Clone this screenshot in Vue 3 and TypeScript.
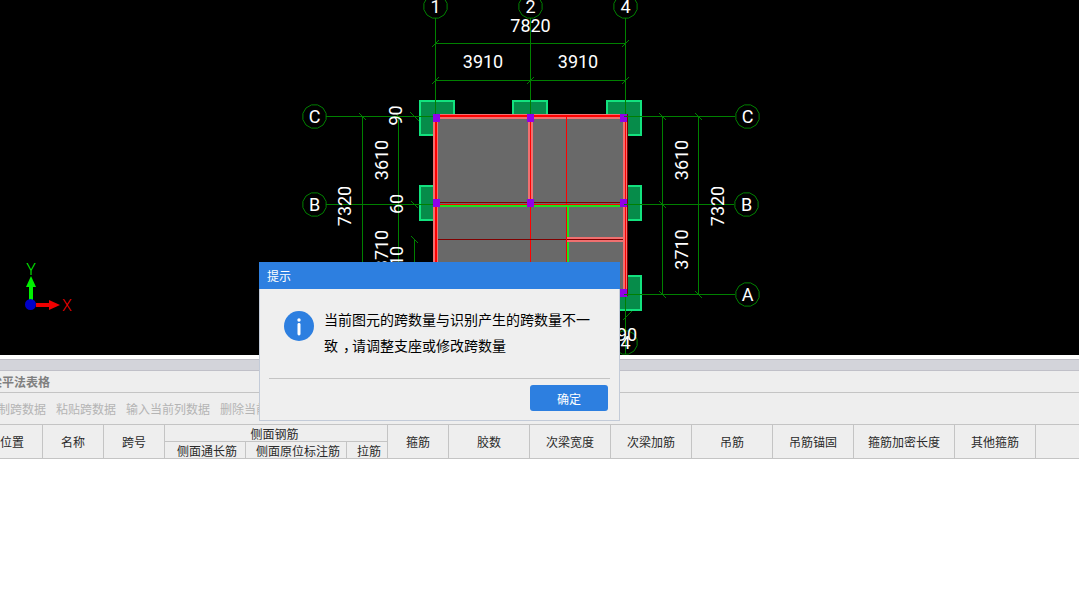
<script setup lang="ts">
interface Dim { t: string; x: number; y: number }
interface Bubble { t: string; x: number; y: number }
interface Tick { x: number; y: number; d: 1 | -1 }
interface Rect { x: number; y: number; w: number; h: number; c: string }

const green = '#008000'

const bubbles: Bubble[] = [
  { t: '1', x: 435, y: 6 }, { t: '2', x: 530, y: 6 }, { t: '4', x: 625, y: 6 },
  { t: 'C', x: 314, y: 116 }, { t: 'C', x: 747, y: 116 },
  { t: 'B', x: 314, y: 204 }, { t: 'B', x: 746, y: 204 },
  { t: 'A', x: 747, y: 294 }, { t: '4', x: 625, y: 342 }
]

function ring(cx: number, cy: number): string {
  const out: string[] = []
  for (let i = 0; i < 12; i++) {
    const a = (Math.PI * 2 * i) / 12 + Math.PI / 12
    out.push(`${(cx + 12 * Math.cos(a)).toFixed(1)},${(cy + 12 * Math.sin(a)).toFixed(1)}`)
  }
  return out.join(' ')
}

const flatDims: Dim[] = [
  { t: '7820', x: 530.5, y: 32 },
  { t: '3910', x: 483, y: 68 },
  { t: '3910', x: 578, y: 68 },
  { t: '90', x: 627, y: 341 }
]
const tallDims: Dim[] = [
  { t: '90', x: 395, y: 115.5 },
  { t: '3610', x: 381, y: 160 },
  { t: '7320', x: 344, y: 206 },
  { t: '60', x: 396, y: 204 },
  { t: '3710', x: 381, y: 250 },
  { t: '10', x: 396, y: 256 },
  { t: '3610', x: 681, y: 160 },
  { t: '3710', x: 681, y: 249.5 },
  { t: '7320', x: 717, y: 206 }
]

const ticks: Tick[] = [
  { x: 435, y: 43, d: 1 }, { x: 625, y: 43, d: 1 },
  { x: 435, y: 80, d: 1 }, { x: 530, y: 80, d: 1 }, { x: 625, y: 80, d: 1 },
  { x: 362, y: 116, d: -1 }, { x: 398, y: 116, d: -1 },
  { x: 413, y: 115, d: -1 }, { x: 415, y: 117, d: -1 },
  { x: 414, y: 204, d: -1 }, { x: 414, y: 239, d: -1 },
  { x: 662, y: 116, d: -1 }, { x: 698, y: 116, d: -1 },
  { x: 662, y: 204, d: -1 }, { x: 662, y: 294, d: -1 }, { x: 698, y: 294, d: -1 },
  { x: 626, y: 316, d: 1 }, { x: 628, y: 314, d: 1 }
]

const columns = [
  { x: 419, y: 100, w: 36, h: 36 }, { x: 512, y: 100, w: 36, h: 36 },
  { x: 606, y: 100, w: 36, h: 36 }, { x: 419, y: 185, w: 36, h: 36 },
  { x: 606, y: 185, w: 36, h: 36 }, { x: 606, y: 275, w: 36, h: 36 }
]

const pink = '#f07070'
const red = '#ff0000'
const dark = '#800000'
const lime = '#20e020'
const beams: Rect[] = [
  { x: 433, y: 114, w: 195, h: 5, c: pink },
  { x: 433, y: 115, w: 195, h: 2, c: red },
  { x: 433, y: 114, w: 5, h: 182, c: pink },
  { x: 435, y: 114, w: 2, h: 182, c: red },
  { x: 528, y: 114, w: 5, h: 90, c: pink },
  { x: 530, y: 114, w: 1, h: 182, c: red },
  { x: 623, y: 114, w: 5, h: 182, c: pink },
  { x: 625, y: 114, w: 1, h: 182, c: red },
  { x: 627, y: 114, w: 1, h: 182, c: dark },
  { x: 566, y: 116, w: 1, h: 180, c: red },
  { x: 567, y: 207, w: 2, h: 89, c: lime },
  { x: 438, y: 205, w: 185, h: 2, c: lime },
  { x: 433, y: 202, w: 195, h: 1, c: dark },
  { x: 433, y: 204, w: 195, h: 1, c: red },
  { x: 438, y: 239, w: 128, h: 1, c: dark },
  { x: 567, y: 237, w: 56, h: 5, c: pink },
  { x: 567, y: 239, w: 56, h: 1, c: dark }
]

const nodes = [
  { x: 433, y: 114 }, { x: 527, y: 114 }, { x: 620, y: 114 },
  { x: 433, y: 199 }, { x: 527, y: 199 }, { x: 620, y: 199 },
  { x: 620, y: 289 }
]

const toolItems = ['复制跨数据', '粘贴跨数据', '输入当前列数据', '删除当前列数据']

const leftCols = [
  { t: '位置', w: 61 }, { t: '名称', w: 61 }, { t: '跨号', w: 61 }
]
const subCols = [
  { t: '侧面通长筋', w: 81 }, { t: '侧面原位标注筋', w: 101 }, { t: '拉筋', w: 40 }
]
const rightCols = [
  { t: '箍筋', w: 61 }, { t: '胶数', w: 81 }, { t: '次梁宽度', w: 81 },
  { t: '次梁加筋', w: 81 }, { t: '吊筋', w: 81 }, { t: '吊筋锚固', w: 81 },
  { t: '箍筋加密长度', w: 101 }, { t: '其他箍筋', w: 81 }
]
</script>

<template>
  <div class="page">
    <svg class="canvas" width="1079" height="355" viewBox="0 0 1079 355">
      <g v-for="(c, i) in columns" :key="'col' + i" shape-rendering="crispEdges">
        <rect :x="c.x + 1" :y="c.y + 1" :width="c.w - 2" :height="c.h - 2" fill="#068c4a" stroke="#12e27e" stroke-width="2" />
      </g>

      <g :stroke="green" stroke-width="1" shape-rendering="crispEdges" fill="none">
        <path d="M435.5 18V116M530.5 18V116M625.5 18V354" />
        <path d="M435 43.5H625M435 80.5H625" />
        <path d="M326 116.5H735M326 204.5H734M600 294.5H735" />
        <path d="M362.5 116V300M398.5 116V300M414.5 239V300" />
        <path d="M662.5 116V294M698.5 116V294" />
      </g>

      <g :stroke="green" stroke-width="1" fill="none">
        <polygon v-for="(b, i) in bubbles" :key="'ring' + i" :points="ring(b.x + 0.5, b.y + 0.5)" />
        <line
          v-for="(t, i) in ticks"
          :key="'tick' + i"
          :x1="t.x + 0.5 - 3.5"
          :y1="t.y + 0.5 + 3.5 * t.d"
          :x2="t.x + 0.5 + 3.5"
          :y2="t.y + 0.5 - 3.5 * t.d"
        />
      </g>

      <g shape-rendering="crispEdges">
        <rect x="433" y="114" width="195" height="182" fill="#696969" />
        <rect v-for="(b, i) in beams" :key="'beam' + i" :x="b.x" :y="b.y" :width="b.w" :height="b.h" :fill="b.c" />
        <rect v-for="(n, i) in nodes" :key="'node' + i" :x="n.x" :y="n.y" width="7" height="8" fill="#9000e8" />
        <rect x="624" y="204" width="18" height="1" :fill="green" />
        <rect x="624" y="116" width="18" height="1" :fill="green" />
        <rect x="624" y="294" width="18" height="1" :fill="green" />
        <rect x="419" y="116" width="14" height="1" :fill="green" />
        <rect x="419" y="204" width="14" height="1" :fill="green" />
      </g>

      <text v-for="(b, i) in bubbles" :key="'label' + i" class="cad" :x="b.x + 0.5" :y="b.y + 7" text-anchor="middle">{{ b.t }}</text>
      <text v-for="(d, i) in flatDims" :key="'flat' + i" class="cad" :x="d.x" :y="d.y" text-anchor="middle">{{ d.t }}</text>
      <text
        v-for="(d, i) in tallDims"
        :key="'tall' + i"
        class="cad"
        text-anchor="middle"
        :transform="`translate(${d.x + 6.5} ${d.y}) rotate(-90)`"
      >{{ d.t }}</text>

      <g shape-rendering="crispEdges">
        <rect x="29" y="287" width="4" height="14" fill="#00f000" />
        <rect x="36" y="303" width="14" height="4" fill="#f00000" />
      </g>
      <polygon points="31,276 26,287 36,287" fill="#00f000" />
      <polygon points="60,305 49,300 49,310" fill="#f00000" />
      <circle cx="30.5" cy="304.5" r="5.5" fill="#0000c8" />
      <text class="axis-y" x="31" y="275" text-anchor="middle">Y</text>
      <text class="axis-x" x="67" y="311" text-anchor="middle">X</text>
    </svg>

    <section class="panel">
      <div class="strip"></div>
      <div class="title-row"><span class="title">梁平法表格</span></div>
      <div class="tool-row">
        <span v-for="item in toolItems" :key="item" class="tool">{{ item }}</span>
      </div>
      <div class="head">
        <div v-for="c in leftCols" :key="c.t" class="cell" :style="{ width: c.w + 'px' }">{{ c.t }}</div>
        <div class="group">
          <div class="group-top">侧面钢筋</div>
          <div class="group-sub">
            <div v-for="c in subCols" :key="c.t" class="sub" :style="{ width: c.w + 'px' }">{{ c.t }}</div>
          </div>
        </div>
        <div v-for="c in rightCols" :key="c.t" class="cell" :style="{ width: c.w + 'px' }">{{ c.t }}</div>
        <div class="rest"></div>
      </div>
    </section>

    <div class="dialog">
      <header class="dlg-head">提示</header>
      <div class="dlg-body">
        <svg class="dlg-icon" width="30" height="30" viewBox="0 0 30 30">
          <circle cx="15" cy="15" r="15" fill="#2d7fe0" />
          <circle cx="15" cy="9" r="1.7" fill="#fff" />
          <rect x="13.5" y="12" width="3" height="12.5" rx="1.4" fill="#fff" />
        </svg>
        <p class="dlg-text">当前图元的跨数量与识别产生的跨数量不一致<span class="comma">，</span>请调整支座或修改跨数量</p>
      </div>
      <div class="dlg-rule"></div>
      <div class="dlg-foot">
        <button class="dlg-btn" type="button">确定</button>
      </div>
    </div>
  </div>
</template>

<style>
html, body { margin: 0; background: #fff; }
</style>

<style scoped>
.page {
  position: relative;
  width: 1079px;
  height: 590px;
  overflow: hidden;
  background: #fff;
  font-family: "Noto Sans CJK SC", "Liberation Sans", sans-serif;
  font-size: 12px;
}
.canvas { display: block; background: #000; }
.cad {
  font-family: "Roboto", "Liberation Sans", sans-serif;
  font-weight: 400;
  font-size: 18px;
  fill: #fff;
}
.axis-y, .axis-x { font-family: "Roboto", "Liberation Sans", sans-serif; font-weight: 300; font-size: 16px; }
.axis-y { fill: #00f000; }
.axis-x { fill: #f00000; }

.panel { margin-top: 4px; background: #eee; }
.strip {
  height: 10px;
  background: #d3d4da;
  border-top: 1px solid #c0c0c8;
  border-bottom: 1px solid #c0c0c8;
}
.title-row {
  height: 21px;
  border-bottom: 1px solid #c4c4c4;
  line-height: 21px;
  margin-left: -10px;
}
.title { font-weight: 700; color: #808080; }
.tool-row {
  height: 31px;
  display: flex;
  gap: 10px;
  align-items: center;
  margin-left: -14px;
  color: #b4b4b4;
  white-space: nowrap;
}
.head {
  display: flex;
  width: 1097px;
  height: 35px;
  margin-left: -18px;
  box-sizing: border-box;
  border-top: 1px solid #c4c4c4;
  border-bottom: 1px solid #c4c4c4;
  color: #2a2a2a;
}
.cell, .sub {
  box-sizing: border-box;
  display: flex;
  align-items: center;
  justify-content: center;
  border-right: 1px solid #c4c4c4;
  white-space: nowrap;
}
.sub { padding-left: 4px; flex: none; }
.group {
  box-sizing: border-box;
  width: 223px;
  display: flex;
  flex-direction: column;
  border-right: 1px solid #c4c4c4;
}
.group-top {
  height: 17px;
  line-height: 18px;
  padding-right: 3px;
  text-align: center;
  box-sizing: border-box;
  border-bottom: 1px solid #c4c4c4;
}
.group-sub { flex: 1; display: flex; }
.sub:last-child { border-right: 0; }
.rest { flex: 1; }

.dialog {
  position: absolute;
  left: 259px;
  top: 262px;
  width: 361px;
  height: 159px;
  box-sizing: border-box;
  background: #efefef;
  border: 1px solid #c3cbd8;
  border-top: 0;
  display: flex;
  flex-direction: column;
}
.dlg-head {
  height: 27px;
  margin: 0 -1px;
  padding-left: 8px;
  background: #2d7fe0;
  color: #fff;
  line-height: 27px;
  font-size: 12px;
}
.dlg-body {
  height: 89px;
  display: flex;
  padding: 22px 27px 0 24px;
  box-sizing: border-box;
  gap: 10px;
}
.dlg-icon { flex: none; }
.dlg-text {
  margin: -5px 0 0;
  font-size: 14px;
  line-height: 26px;
  color: #000;
}
.comma { font-feature-settings: "halt"; padding: 0 2px 0 5px; }
.dlg-rule {
  height: 1px;
  margin: 0 9px;
  background: #c4c4c4;
}
.dlg-foot {
  display: flex;
  justify-content: flex-end;
  padding: 6px 11px 0 0;
}
.dlg-btn {
  width: 78px;
  height: 26px;
  border: 0;
  padding: 0;
  border-radius: 3px;
  background: #2d7fe0;
  color: #fff;
  font-family: inherit;
  font-size: 12px;
}
</style>
